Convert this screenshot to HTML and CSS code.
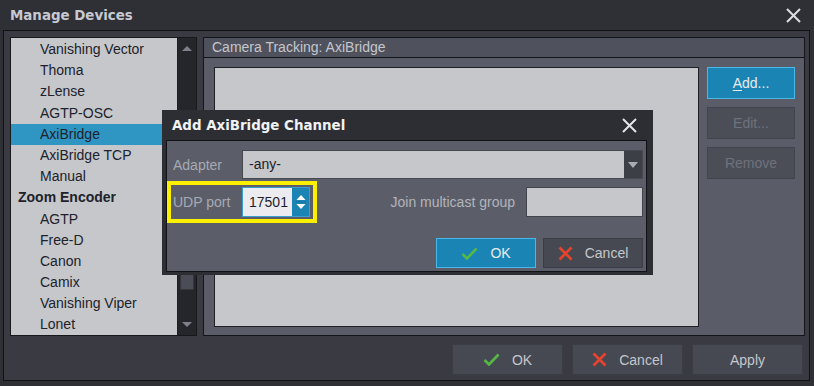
FILE: index.html
```html
<!DOCTYPE html>
<html>
<head>
<meta charset="utf-8">
<title>Manage Devices</title>
<link rel="stylesheet" href="styles.css">
</head>
<body>
<div class="window">
  <div class="titlebar">
    <span class="title">Manage Devices</span>
    <svg class="close-icon" width="15" height="15" viewBox="0 0 15 15"><path d="M1 1 L14 14 M14 1 L1 14" stroke="#dcdee3" stroke-width="2" fill="none"/></svg>
  </div>
  <div class="client">
    <div class="main">
      <div class="listbox">
        <ul class="items">
          <li class="item">Vanishing Vector</li>
          <li class="item">Thoma</li>
          <li class="item">zLense</li>
          <li class="item">AGTP-OSC</li>
          <li class="item selected">AxiBridge</li>
          <li class="item">AxiBridge TCP</li>
          <li class="item">Manual</li>
          <li class="category">Zoom Encoder</li>
          <li class="item">AGTP</li>
          <li class="item">Free-D</li>
          <li class="item">Canon</li>
          <li class="item">Camix</li>
          <li class="item">Vanishing Viper</li>
          <li class="item">Lonet</li>
        </ul>
        <div class="vscroll">
          <svg class="arrow" width="12" height="8" viewBox="0 0 12 8"><path d="M1 7 L6 2 L11 7 Z" fill="#7e818a"/></svg>
          <div class="track"><div class="thumb"></div></div>
          <svg class="arrow" width="12" height="8" viewBox="0 0 12 8"><path d="M1 1 L6 6 L11 1 Z" fill="#7e818a"/></svg>
        </div>
      </div>
      <div class="panel">
        <div class="panel-head">Camera Tracking: AxiBridge</div>
        <div class="panel-body">
          <div class="channels"></div>
          <div class="side-buttons">
            <button class="btn btn-primary"><span><u>A</u>dd...</span></button>
            <button class="btn btn-disabled">Edit...</button>
            <button class="btn btn-disabled">Remove</button>
          </div>
        </div>
      </div>
    </div>
    <div class="footer">
      <button class="btn btn-footer">
        <svg class="ico" width="17" height="13" viewBox="0 0 17 13"><path d="M1.5 7 L6 11.5 L15.5 1.5" stroke="#55b846" stroke-width="2.6" fill="none"/></svg>
        <span>OK</span>
      </button>
      <button class="btn btn-footer">
        <svg class="ico" width="15" height="15" viewBox="0 0 15 15"><path d="M1.5 1.5 L13.5 13.5 M13.5 1.5 L1.5 13.5" stroke="#e8432d" stroke-width="2.6" fill="none"/></svg>
        <span>Cancel</span>
      </button>
      <button class="btn btn-footer">Apply</button>
    </div>
  </div>

  <div class="dialog">
    <div class="dlg-title">
      <span class="dlg-caption">Add AxiBridge Channel</span>
      <svg class="close-icon" width="15" height="15" viewBox="0 0 15 15"><path d="M1 1 L14 14 M14 1 L1 14" stroke="#e4e5e9" stroke-width="2" fill="none"/></svg>
    </div>
    <div class="dlg-body">
      <div class="row row-adapter">
        <span class="lbl lbl-adapter">Adapter</span>
        <div class="combo">
          <span class="combo-value">-any-</span>
          <span class="combo-btn">
            <svg width="10" height="6" viewBox="0 0 10 6"><path d="M0 0 L10 0 L5 6 Z" fill="#a9acb4"/></svg>
          </span>
        </div>
      </div>
      <div class="row row-port">
        <div class="highlight">
          <span class="lbl lbl-port">UDP port</span>
          <div class="spin">
            <span class="spin-value">17501</span>
            <span class="spin-btn">
              <svg width="12" height="20" viewBox="0 0 12 20"><path d="M1.5 8 L6 3 L10.5 8 Z" fill="#ffffff"/><path d="M1.5 12 L6 17 L10.5 12 Z" fill="#ffffff"/><path d="M1 10 L11 10" stroke="#14729e" stroke-width="1"/></svg>
            </span>
          </div>
        </div>
        <span class="lbl lbl-join">Join multicast group</span>
        <div class="field"></div>
      </div>
      <div class="row row-actions">
        <button class="btn btn-primary btn-dlg">
          <svg class="ico" width="17" height="13" viewBox="0 0 17 13"><path d="M1.5 7 L6 11.5 L15.5 1.5" stroke="#55b846" stroke-width="2.6" fill="none"/></svg>
          <span>OK</span>
        </button>
        <button class="btn btn-footer btn-dlg">
          <svg class="ico" width="15" height="15" viewBox="0 0 15 15"><path d="M1.5 1.5 L13.5 13.5 M13.5 1.5 L1.5 13.5" stroke="#e8432d" stroke-width="2.6" fill="none"/></svg>
          <span>Cancel</span>
        </button>
      </div>
    </div>
  </div>
</div>
</body>
</html>
```
FILE: styles.css
```css
* { box-sizing: border-box; }

body {
  margin: 0;
  background: #2b2c31;
  font-family: "Liberation Sans", Arial, sans-serif;
  font-size: 14px;
}

.window {
  position: relative;
  width: 814px;
  height: 386px;
  padding: 0 4px 5px 3px;
  background: #2f3036;
  display: flex;
  flex-direction: column;
}

/* title bar */
.titlebar {
  height: 30px;
  flex: none;
  display: flex;
  align-items: center;
  padding-left: 7px;
  padding-right: 9px;
}
.title {
  font-family: "DejaVu Sans", sans-serif;
  font-weight: bold;
  font-size: 13.4px;
  color: #c6c9d2;
}
.close-icon { margin-left: auto; display: block; }

/* client area */
.client {
  flex: 1;
  border: 1px solid #101114;
  background: #3a3b42;
  padding: 6px 4px 5px 6px;
  display: flex;
  flex-direction: column;
}
.main {
  height: 299px;
  display: flex;
  gap: 6px;
}

/* device list */
.listbox {
  width: 187px;
  border: 1px solid #17181c;
  background: #c6c7cb;
  display: flex;
}
.items {
  flex: 1;
  list-style: none;
  margin: 0;
  padding: 1px 0 0;
  overflow: hidden;
}
.items li {
  height: 21.2px;
  line-height: 21.2px;
  color: #20222a;
  white-space: nowrap;
}
.item { padding-left: 29px; }
.item.selected { background: #2f95c3; }
.category { padding-left: 7px; font-weight: bold; }

.vscroll {
  width: 19px;
  background: #25262b;
  border-left: 1px solid #1d1e22;
  display: flex;
  flex-direction: column;
  align-items: center;
}
.vscroll .arrow { flex: none; margin: 6px 0; }
.track { flex: 1; width: 100%; position: relative; }
.thumb {
  position: absolute;
  left: 2px;
  right: 2px;
  top: 193px;
  height: 39px;
  background: #4a4d56;
  border: 1px solid #33353b;
}

/* right panel */
.panel {
  flex: 1;
  border: 1px solid #141519;
  display: flex;
  flex-direction: column;
}
.panel-head {
  height: 20px;
  flex: none;
  background: #4f525c;
  border-bottom: 1px solid #141519;
  color: #c4c6cc;
  padding-left: 8px;
  line-height: 19px;
}
.panel-body {
  flex: 1;
  background: #5a5d68;
  padding: 9px 9px 8px 10px;
  display: flex;
  gap: 8px;
}
.channels {
  flex: 1;
  background: #c6c7cb;
  border: 1px solid #1f2025;
}
.side-buttons {
  width: 88px;
  display: flex;
  flex-direction: column;
  gap: 8px;
}

/* buttons */
.btn {
  font-family: "Liberation Sans", Arial, sans-serif;
  font-size: 14px;
  height: 32px;
  margin: 0;
  padding: 0;
  display: flex;
  align-items: center;
  justify-content: center;
  gap: 12px;
  cursor: default;
}
.btn u { text-decoration-thickness: 1px; text-underline-offset: 2px; }
.btn-primary {
  background: #1a84b4;
  border: 1px solid #4ab7e6;
  color: #e9ebef;
}
.btn-disabled {
  background: #4b4e57;
  border: 1px solid #42444c;
  color: #6f727c;
}
.btn-footer {
  background: #464951;
  border: 1px solid #3b3d44;
  color: #c4c6cc;
}
.ico { display: block; }

.footer {
  margin-top: 8px;
  display: flex;
  justify-content: flex-end;
  gap: 9px;
  padding-right: 2px;
}
.footer .btn { width: 111px; height: 31px; }

/* channel dialog, floating above the window */
.dialog {
  position: absolute;
  left: 162px;
  top: 110px;
  width: 491px;
  height: 165px;
  background: #2d2e34;
  padding: 0 6px 4px 4px;
  display: flex;
  flex-direction: column;
}
.dlg-title {
  height: 30px;
  flex: none;
  display: flex;
  align-items: center;
  padding-left: 6px;
  padding-right: 10px;
}
.dlg-caption {
  font-family: "DejaVu Sans", sans-serif;
  font-weight: bold;
  font-size: 13.4px;
  color: #f1f2f5;
}
.dlg-body {
  flex: 1;
  background: #5b5e69;
  border: 1px solid #111215;
  padding: 9px 3px 3px 0;
  display: flex;
  flex-direction: column;
}
.row { display: flex; align-items: center; }
.lbl { color: #a7aab2; white-space: nowrap; }
.lbl-adapter { width: 75px; padding-left: 6px; flex: none; }

.combo {
  flex: 1;
  height: 29px;
  display: flex;
  background: #c6c7cb;
  border: 1px solid #474950;
}
.combo-value { flex: 1; padding-left: 6px; line-height: 27px; color: #1f2027; }
.combo-btn {
  width: 18px;
  background: #3d3f47;
  display: flex;
  align-items: center;
  justify-content: center;
}

.row-port { margin-top: 2px; }
.highlight {
  border: 4px solid #fbf000;
  padding: 2px 3px 2px 2px;
  display: flex;
  align-items: center;
}
.lbl-port { width: 69px; }
.spin {
  width: 68px;
  height: 30px;
  display: flex;
  border: 1px solid #3a9fd0;
  background: #ececf0;
}
.spin-value { flex: 1; padding-left: 6px; line-height: 28px; color: #1d1d2a; }
.spin-btn {
  width: 17px;
  background: #1b84b4;
  display: flex;
  align-items: center;
  justify-content: center;
}
.lbl-join { margin-left: auto; margin-right: 11px; color: #b2b4bb; }
.field {
  width: 117px;
  height: 30px;
  background: #c6c7cb;
  border: 1px solid #43454c;
}

.row-actions {
  margin-top: 15px;
  justify-content: flex-end;
  gap: 7px;
}
.btn-dlg { width: 100px; height: 30px; }
```
